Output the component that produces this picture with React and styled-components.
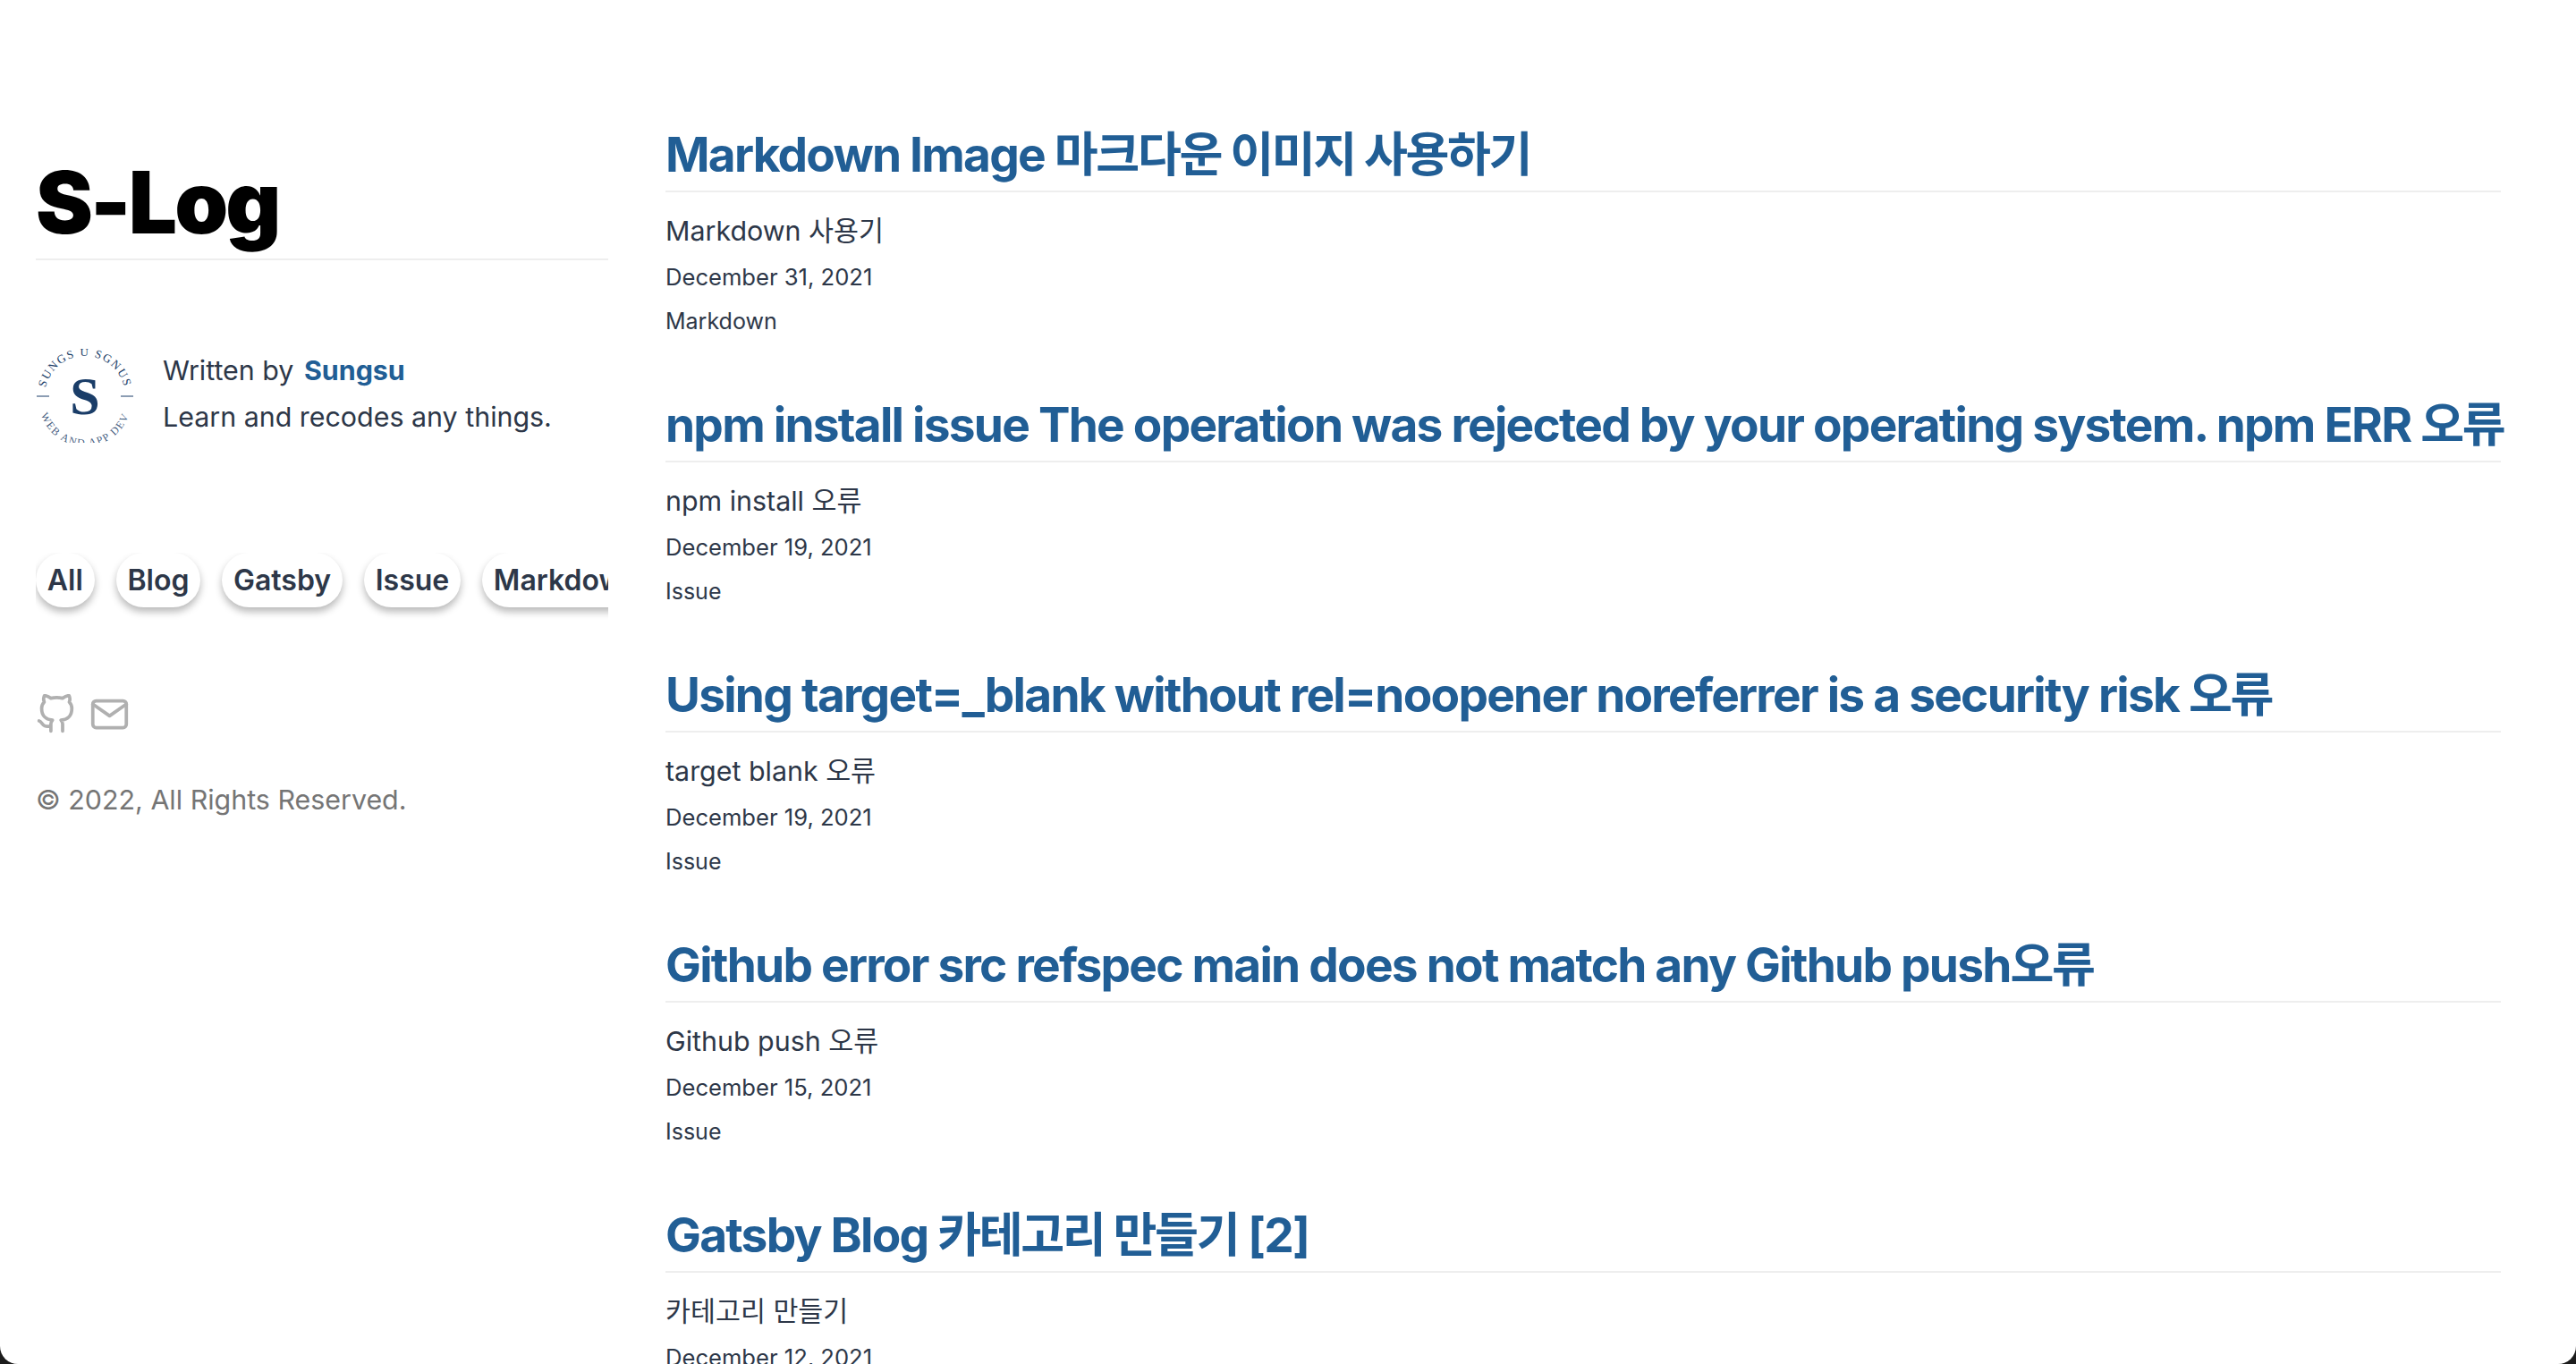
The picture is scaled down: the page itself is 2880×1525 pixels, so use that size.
import React from "react";
import styled, { createGlobalStyle } from "styled-components";
import { FiGithub, FiMail } from "react-icons/fi";

const Global = createGlobalStyle`
  html, body { margin: 0; padding: 0; height: 100%; background: #1c1c1c; }
  body { font-family: Inter, "Noto Sans CJK KR", sans-serif; color: #2d3748; }
  * { box-sizing: border-box; }
`;

const Frame = styled.div`
  width: 2880px;
  height: 1525px;
  overflow: hidden;
  background: #fff;
  border-radius: 0 0 20px 20px;
  display: grid;
  grid-template-columns: 744px 2052px;
`;

const Sidebar = styled.aside`
  padding: 169px 64px 0 40px;
  display: flex;
  flex-direction: column;
  min-width: 0;
`;

const SiteTitle = styled.h1`
  margin: 0;
  font-size: 96px;
  font-weight: 900;
  line-height: 115px;
  letter-spacing: -0.03em;
  color: #000;
  padding-bottom: 5px;
  border-bottom: 2px solid #eeeeee;
`;

const Bio = styled.div`
  margin-top: 98px;
  display: flex;
  align-items: center;
  gap: 32px;
`;

const BioText = styled.p`
  margin: 0 0 4px;
  font-size: 30.4px;
  line-height: 51.6px;
`;

const Author = styled.a`
  margin-left: 3px;
  color: #215e95;
  font-weight: 700;
`;

const Tags = styled.div`
  margin-top: 122px;
  display: flex;
  gap: 24px;
  overflow: hidden;
  padding-bottom: 24px;
`;

const Tag = styled.button`
  flex: none;
  border: 0;
  background: #fff;
  font: 600 32px Inter, sans-serif;
  color: #2d3748;
  height: 61px;
  padding: 0 12.8px;
  border-radius: 30.5px;
  box-shadow: 0 5px 8px rgba(0, 0, 0, 0.28);
`;

const Socials = styled.div`
  margin-top: 73px;
  display: flex;
  gap: 15px;
  align-items: center;
  color: #b0b0b0;
`;

const Copy = styled.p`
  margin: 48px 0 0;
  font-size: 30.4px;
  line-height: 51.6px;
  color: #757575;
`;

const Posts = styled.main`
  padding-top: 141px;
`;

const Post = styled.article`
  height: 302px;
`;

const PostTitle = styled.h2`
  margin: 0;
  font-size: 53.2px;
  font-weight: 700;
  letter-spacing: -0.033em;
  line-height: 64px;
  color: #215e95;
  white-space: nowrap;
  padding-bottom: 8px;
  border-bottom: 2px solid #eeeeee;
`;

const Hangul = styled.span`
  letter-spacing: -0.045em;
`;

const Summary = styled.p`
  margin: 21px 0 0;
  font-size: 30.4px;
  line-height: 45.6px;
`;

const PostDate = styled.p`
  margin: 9.5px 0 0;
  font-size: 25.6px;
  line-height: 38.4px;
`;

const Category = styled.p`
  margin: 11px 0 0;
  font-size: 25px;
  line-height: 37.5px;
`;

const LogoMark = styled.svg`
  flex: none;
  display: block;
`;

const Logo = () => (
  <LogoMark width="110" height="105" viewBox="0 0 110 105">
    <defs>
      <path id="logo-top" d="M10 53 A45 45 0 0 1 100 53" />
      <path id="logo-bottom" d="M3 57 A52 52 0 0 0 107 57" />
    </defs>
    <g fill="#1a3d68" fontFamily="'Liberation Serif', serif">
      <text fontSize="13" letterSpacing="1.6"><textPath href="#logo-top" startOffset="50%" textAnchor="middle">SUNGS U SGNUS</textPath></text>
      <text fontSize="12" letterSpacing="1.5" fillOpacity=".85"><textPath href="#logo-bottom" startOffset="50%" textAnchor="middle">WEB AND APP DEV</textPath></text>
      <text x="55" y="73" fontSize="60" fontWeight="700" textAnchor="middle">S</text>
    </g>
    <path d="M1 53H15M95 53H109" stroke="#1a3d68" strokeWidth="1" />
  </LogoMark>
);

const posts = [
  ["Markdown Image 마크다운 이미지 사용하기", "Markdown 사용기", "December 31, 2021", "Markdown"],
  ["npm install issue The operation was rejected by your operating system. npm ERR 오류", "npm install 오류", "December 19, 2021", "Issue"],
  ["Using target=_blank without rel=noopener noreferrer is a security risk 오류", "target blank 오류", "December 19, 2021", "Issue"],
  ["Github error src refspec main does not match any Github push오류", "Github push 오류", "December 15, 2021", "Issue"],
  ["Gatsby Blog 카테고리 만들기 [2]", "카테고리 만들기", "December 12, 2021", "Gatsby"],
];

const renderTitle = (title) =>
  title.split(/([가-힣]+(?: [가-힣]+)*)/).map((part, i) =>
    i % 2 ? <Hangul key={i}>{part}</Hangul> : part
  );

export default function App() {
  return (
    <>
      <Global />
      <Frame>
        <Sidebar>
          <SiteTitle>S-Log</SiteTitle>
          <Bio>
            <Logo />
            <BioText>
              Written by <Author>Sungsu</Author>
              <br />
              Learn and recodes any things.
            </BioText>
          </Bio>
          <Tags>
            {["All", "Blog", "Gatsby", "Issue", "Markdown"].map((t) => (
              <Tag key={t}>{t}</Tag>
            ))}
          </Tags>
          <Socials>
            <FiGithub size={45} />
            <FiMail size={45} />
          </Socials>
          <Copy>© 2022, All Rights Reserved.</Copy>
        </Sidebar>
        <Posts>
          {posts.map(([title, summary, date, cat]) => (
            <Post key={title}>
              <PostTitle>{renderTitle(title)}</PostTitle>
              <Summary>{summary}</Summary>
              <PostDate>{date}</PostDate>
              <Category>{cat}</Category>
            </Post>
          ))}
        </Posts>
      </Frame>
    </>
  );
}
